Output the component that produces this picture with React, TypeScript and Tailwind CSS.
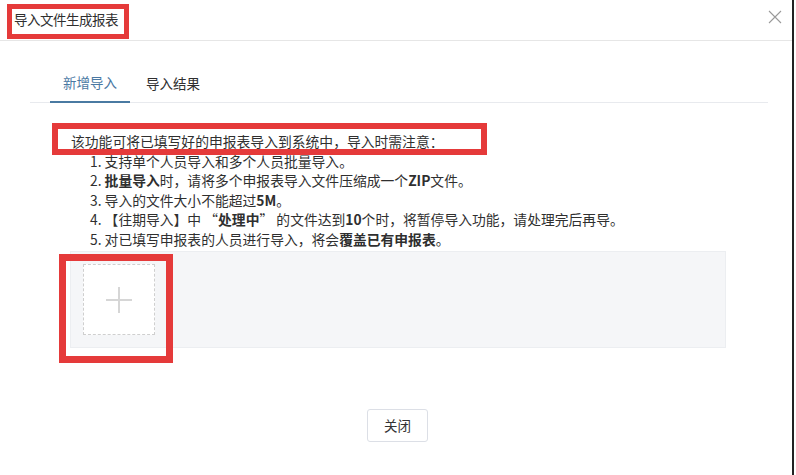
const font = {
  fontFamily: '"Noto Sans CJK SC", "Open Sans", sans-serif',
};

function CloseIcon() {
  return (
    <svg width="14" height="14" viewBox="0 0 14 14" className="block">
      <path d="M1 1 L13 13 M13 1 L1 13" stroke="#9a9a9a" strokeWidth="1.1" fill="none" />
    </svg>
  );
}

function PlusIcon() {
  return (
    <svg width="28" height="28" viewBox="0 0 28 28" className="block">
      <path d="M14 1 V27 M1 14 H27" stroke="#d6d6d6" strokeWidth="2" fill="none" />
    </svg>
  );
}

const notes: React.ReactNode[] = [
  <>1. 支持单个人员导入和多个人员批量导入。</>,
  <>
    2. <b>批量导入</b>时，请将多个申报表导入文件压缩成一个<b>ZIP</b>文件。
  </>,
  <>
    3. 导入的文件大小不能超过<b>5M</b>。
  </>,
  <>
    4. 【往期导入】中 “<b>处理中</b>” 的文件达到<b>10</b>个时，将暂停导入功能，请处理完后再导。
  </>,
  <>
    5. 对已填写申报表的人员进行导入，将会<b>覆盖已有申报表</b>。
  </>,
];

export default function App() {
  return (
    <div
      className="relative flex h-[475px] w-[796px] overflow-hidden bg-white text-[13.5px] text-[#2f2f2f]"
      style={font}
    >
      <div className="flex w-[792px] flex-col">
        {/* header */}
        <div className="flex h-[41px] items-center justify-between border-b border-[#e6e6e6] pl-[14px] pr-[10px]">
          <span className="leading-none tracking-[-0.5px]">导入文件生成报表</span>
          <span className="-mt-[6px]">
            <CloseIcon />
          </span>
        </div>

        {/* tabs */}
        <div className="ml-[30px] mt-[22px] flex w-[738px] border-b border-[#e8eaee] pl-[20px]">
          <div className="-mb-px flex h-[40px] items-center border-b-2 border-[#4a7aa2] px-[13px] text-[#4a78a3]">
            新增导入
          </div>
          <div className="-mb-px flex h-[40px] items-center pl-[16px]">导入结果</div>
        </div>

        {/* notes */}
        <div className="mt-[29px] pl-[71px] text-[13.8px] leading-[19.5px]">
          <p>该功能可将已填写好的申报表导入到系统中，导入时需注意：</p>
          <ul className="pl-[19px]">
            {notes.map((n, i) => (
              <li key={i}>{n}</li>
            ))}
          </ul>
        </div>

        {/* upload area */}
        <div className="ml-[70px] mt-[2px] w-[656px] border border-[#eceef1] bg-[#f5f6f8] p-[12px]">
          <div className="flex h-[71px] w-[72px] items-center justify-center border border-dashed border-[#cfcfcf] bg-white">
            <PlusIcon />
          </div>
        </div>

        {/* footer */}
        <div className="mt-[61px] flex justify-center pl-[3px]">
          <button className="h-[33px] w-[61px] rounded-[3px] border border-[#dcdfe6] bg-white text-[13.5px] text-[#333]">
            关闭
          </button>
        </div>
      </div>
      <div className="h-full w-[2px] bg-[#222]" />

      {/* red annotation boxes */}
      <div className="absolute left-[7px] top-[4px] h-[35px] w-[122px] border-[5px] border-[#e53a3a]" />
      <div className="absolute left-[52px] top-[123px] h-[32px] w-[435px] border-[6px] border-[#e53a3a]" />
      <div className="absolute left-[59px] top-[254px] h-[109px] w-[114px] border-[7px] border-[#e53a3a]" />
    </div>
  );
}
